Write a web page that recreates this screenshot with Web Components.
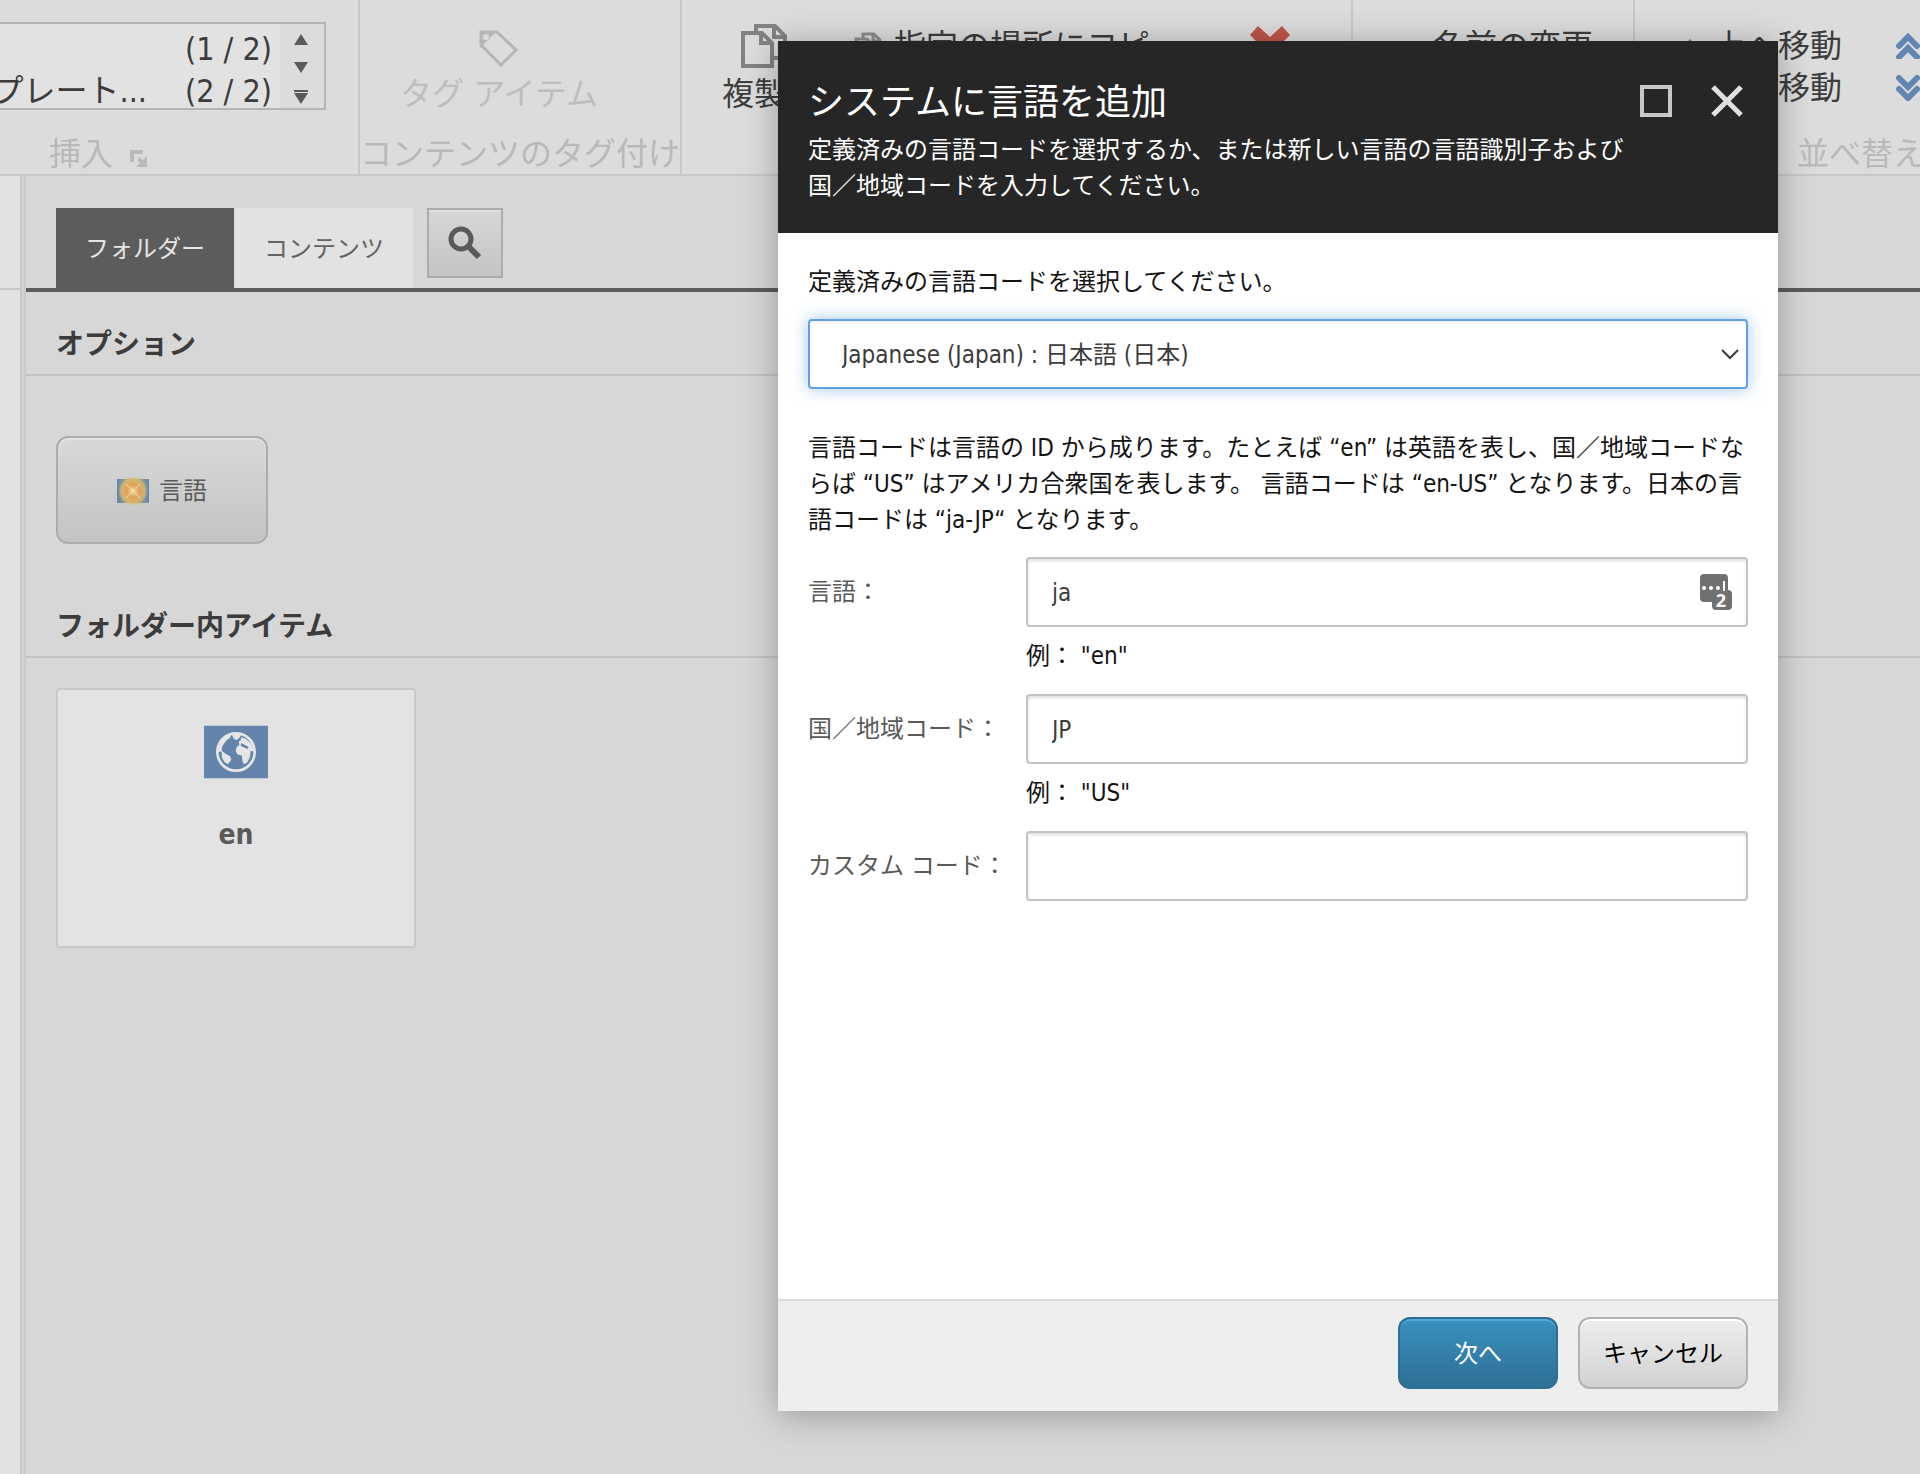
<!DOCTYPE html>
<html lang="ja">
<head>
<meta charset="utf-8">
<title>システムに言語を追加</title>
<style>
  html, body { margin: 0; height: 100%; }
  body {
    font-family: "DejaVu Sans Condensed", "Noto Sans CJK JP", sans-serif;
    font-size: 24px;
    line-height: 36px;
    color: #3c3c3c;
    background: #d7d7d7;
    overflow: hidden;
  }
</style>
</head>
<body>
<sc-editor></sc-editor>

<template id="t-editor">
  <style>
    :host { display: flex; flex-direction: column; min-height: 100vh; position: relative; }
    main { flex: 1; display: flex; }
    sc-content { flex: 1; }
    .layer { position: absolute; inset: 0; display: flex; justify-content: flex-end; padding: 41px 142px 63px 0; }
  </style>
  <sc-ribbon></sc-ribbon>
  <main>
    <sc-tree-edge></sc-tree-edge>
    <sc-content></sc-content>
  </main>
  <div class="layer"><sc-language-dialog></sc-language-dialog></div>
</template>

<template id="t-ribbon">
  <style>
    :host { display: flex; height: 174px; background: #dcdcdc; border-bottom: 2px solid #c8c8c8; font-size: 32px; line-height: 42px; overflow: hidden; }
    svg { display: block; flex: none; }
    .gallery { margin-top: 22px; width: 324px; height: 84px; display: flex; border: 2px solid #b4b4b4; border-left: 0; background: #e2e2e2; overflow: hidden; }
    .items { flex: 1; padding: 4px 8px 0 0; min-width: 0; }
    .item { display: flex; justify-content: flex-end; gap: 38px; white-space: nowrap; }
    .scroll { width: 44px; display: flex; flex-direction: column; align-items: center; gap: 16px; background: #dcdcdc; padding: 10px 2px 0 0; box-sizing: border-box; }
    .scroll button { all: unset; display: block; }
    .tools { display: flex; padding-top: 25px; }
    .row { display: flex; align-items: center; height: 42px; gap: 12px; white-space: nowrap; }
    .copy { gap: 48px; }
    .caret { display: inline; margin-left: 6px; }
    .side { padding: 25px 20px 0 0; }
    .delete { margin-top: 26px; }
    .rename { padding-left: 80px; }
    .sort { padding-left: 43px; gap: 53px; }
  </style>
  <sc-ribbon-group style="width:358px">
    <div class="gallery">
      <div class="items">
        <div class="item"><span>(1 / 2)</span></div>
        <div class="item"><span>プレート...</span><span>(2 / 2)</span></div>
      </div>
      <div class="scroll">
        <button aria-label="上へ"><svg width="16" height="12"><path d="M8 0L15 11H1z" fill="#5a5a5a"/></svg></button>
        <button aria-label="下へ"><svg width="16" height="12"><path d="M8 11L15 0H1z" fill="#5a5a5a"/></svg></button>
        <button aria-label="すべて"><svg width="16" height="15"><path d="M8 14L15 3H1zM1 0h14v2H1z" fill="#5a5a5a"/></svg></button>
      </div>
    </div>
    <span slot="label" style="padding-left:49px">挿入</span>
    <svg slot="label" width="17" height="17" style="margin:8px 0 0 17px"><path d="M2 12V2h11M2 2v10" fill="none" stroke="#bababa" stroke-width="4"/><path d="M17 6v11H6l4-4-3-3 3-3 3 3z" fill="#bababa"/></svg>
  </sc-ribbon-group>
  <sc-ribbon-group style="width:320px">
    <sc-big-button disabled>
      <svg slot="icon" width="40" height="38"><path d="M2 2H18L37 20L22 35L2 15Z" fill="none" stroke="#b6b6b6" stroke-width="3"/><path d="M1 1H18L1 18z" fill="#b6b6b6"/><circle cx="7" cy="7" r="3" fill="#dcdcdc"/></svg>
      タグ アイテム
    </sc-big-button>
    <span slot="label">コンテンツのタグ付け</span>
  </sc-ribbon-group>
  <sc-ribbon-group style="width:669px">
    <div class="tools copy" style="padding-top:0">
      <sc-big-button>
        <svg slot="icon" width="46" height="44"><g fill="none" stroke="#828282" stroke-width="4"><path d="M2 9H21L31 19V42H2Z"/><path d="M20 8V19H31"/><path d="M15 8V2H34L44 12V34H33"/><path d="M33 3V13H44"/></g></svg>
        複製<svg class="caret" width="14" height="14"><path d="M0 2H14L7 10z" fill="#5a5a5a"/></svg>
      </sc-big-button>
      <div class="side">
        <div class="row"><svg width="28" height="28"><g fill="none" stroke="#8c8c8c" stroke-width="3"><path d="M2 7H13L20 14V26H2Z"/><path d="M9 6V2H20L26 8V20H21"/><path d="M19 3V9H26"/></g></svg><span>指定の場所にコピー</span></div>
      </div>
      <svg class="delete" width="40" height="42"><path d="M8 0L20 11L32 0L40 9L29 20L40 32L32 40L20 29L8 40L0 32L11 20L0 9z" fill="#c05549"/></svg>
    </div>
  </sc-ribbon-group>
  <sc-ribbon-group style="width:280px">
    <div class="tools rename"><div class="row">名前の変更</div></div>
  </sc-ribbon-group>
  <sc-ribbon-group style="width:300px">
    <div class="tools sort">
      <div>
        <div class="row"><svg width="24" height="18"><path d="M12 2L22 12L18 16L12 10L6 16L2 12z" fill="#5f85b4"/></svg><span>上へ移動</span></div>
        <div class="row"><svg width="24" height="18"><path d="M12 16L22 6L18 2L12 8L6 2L2 6z" fill="#5f85b4"/></svg><span>下へ移動</span></div>
      </div>
      <div>
        <div class="row"><svg width="26" height="26"><path d="M4 13L13 4L22 13M4 24L13 15L22 24" fill="none" stroke="#6086b1" stroke-width="6" stroke-linecap="round"/></svg></div>
        <div class="row"><svg width="26" height="26"><path d="M4 3L13 12L22 3M4 14L13 23L22 14" fill="none" stroke="#6086b1" stroke-width="6" stroke-linecap="round"/></svg></div>
      </div>
    </div>
    <span slot="label" style="padding-left:162px">並べ替え</span>
  </sc-ribbon-group>
</template>

<template id="t-group">
  <style>
    :host { display: flex; flex-direction: column; flex: none; border-right: 2px solid #c8c8c8; }
    :host(:last-of-type) { border-right: 0; }
    .body { height: 134px; }
    .label { display: flex; align-items: center; height: 40px; line-height: 40px; color: #b9b9b9; white-space: nowrap; }
  </style>
  <div class="body"><slot></slot></div>
  <div class="label"><slot name="label"></slot></div>
</template>

<template id="t-big">
  <style>
    :host { display: block; padding: 24px 0 0 40px; }
    button { all: unset; display: flex; flex-direction: column; align-items: center; width: max-content; white-space: nowrap; cursor: pointer; }
    .icon { height: 49px; display: flex; align-items: flex-start; }
    :host([disabled]) .icon { align-items: center; }
    :host([disabled]) button { color: #bebebe; }
  </style>
  <button><span class="icon"><slot name="icon"></slot></span><span><slot></slot></span></button>
</template>

<template id="t-edge">
  <style>
    :host { display: block; width: 26px; box-sizing: border-box; background: #d4d4d4; border-right: 2px solid #cacaca; }
    .pane { height: 100%; width: 20px; background: #e2e2e2; border-right: 2px solid #c8c8c8; }
    .head { height: 112px; border-bottom: 2px solid #c8c8c8; }
  </style>
  <div class="pane"><div class="head"></div></div>
</template>

<template id="t-content">
  <style>
    :host { display: block; background: #d7d7d7; }
    .strip { display: flex; align-items: flex-start; padding: 32px 30px 0; border-bottom: 4px solid #5c5c5c; height: 80px; }
    .tab { all: unset; box-sizing: border-box; height: 80px; padding: 0 29px; line-height: 82px; text-align: center; background: #e2e2e2; color: #646464; cursor: pointer; margin-right: 2px; }
    .tab[aria-selected="true"] { background: #5c5c5c; color: #e6e6e6; margin-right: 1px; }
    .search { box-sizing: border-box; width: 76px; height: 70px; margin: 0 0 0 12px; padding: 0; display: flex; align-items: center; justify-content: center; border: 2px solid #acacac; background: linear-gradient(#d7d7d7, #c4c4c4); box-shadow: inset 0 2px #e0e0e0; }
    h2 { margin: 0; padding: 33px 30px 9px; font-size: 28px; line-height: 40px; font-weight: bold; border-bottom: 2px solid #c2c2c2; }
    .area { padding: 60px 30px 30px; }
    .area.items { padding-top: 30px; }
    .option { font: inherit; color: #5a5a5a; box-sizing: border-box; width: 212px; height: 108px; display: flex; align-items: center; justify-content: center; gap: 10px; border: 2px solid #acacac; border-radius: 12px; background: linear-gradient(#d8d8d8, #c4c4c4); box-shadow: inset 0 2px #e2e2e2; padding: 2px 0 0; }
    .card { text-decoration: none; color: #5a5a5a; box-sizing: border-box; width: 360px; height: 260px; display: flex; flex-direction: column; align-items: center; gap: 36px; padding-top: 35px; border: 2px solid #c8c8c8; border-radius: 4px; background: #e3e3e3; font-size: 28px; line-height: 40px; font-weight: bold; }
    svg { display: block; }
  </style>
  <div class="strip" role="tablist">
    <button class="tab" role="tab" aria-selected="true">フォルダー</button>
    <button class="tab" role="tab" aria-selected="false">コンテンツ</button>
    <button class="search" aria-label="検索"><svg width="34" height="34"><circle cx="13" cy="13" r="10" fill="none" stroke="#5a5a5a" stroke-width="5"/><path d="M20 20L31 31" stroke="#5a5a5a" stroke-width="6"/></svg></button>
  </div>
  <h2>オプション</h2>
  <div class="area">
    <button class="option">
      <svg width="32" height="30" viewBox="0 0 32 30">
        <defs>
          <linearGradient id="field"><stop offset="0" stop-color="#5f86b2"/><stop offset=".3" stop-color="#a3a07a"/><stop offset=".7" stop-color="#a3a07a"/><stop offset="1" stop-color="#5f86b2"/></linearGradient>
          <radialGradient id="sun"><stop offset="0" stop-color="#f2eede"/><stop offset=".15" stop-color="#ecc890"/><stop offset=".4" stop-color="#e0a05a"/><stop offset=".62" stop-color="#dcab60"/><stop offset=".8" stop-color="#d8bd70" stop-opacity=".8"/><stop offset="1" stop-color="#d3bb73" stop-opacity="0"/></radialGradient>
        </defs>
        <path d="M0 3H32V27H0z" fill="url(#field)"/><circle cx="16" cy="15" r="15" fill="url(#sun)"/><path d="M9 8L23 22M23 8L9 22" stroke="#f0d49a" stroke-width="2" opacity=".6"/>
      </svg>
      <span>言語</span>
    </button>
  </div>
  <h2>フォルダー内アイテム</h2>
  <div class="area items">
    <a class="card" href="#en">
      <svg width="64" height="54" viewBox="0 0 192 162">
        <path d="M0 2H192V160H0z" fill="#6384ab"/>
        <circle cx="96" cy="81" r="56" fill="none" stroke="#e6e6e6" stroke-width="8"/>
        <path d="M40 80C42 52 56 34 82 25L78 38L68 46L60 56L54 66L53 80z" fill="#e6e6e6"/>
        <path d="M52 76L64 86L78 94L82 104L72 117L62 112L54 98z" fill="#e6e6e6"/>
        <path d="M82 24H114L108 36L98 46L88 40z" fill="#e6e6e6"/>
        <path d="M112 36L126 42L140 54L147 68L151 82L144 78L140 78L138 96L130 112L120 118L115 108L114 92L100 88L95 78L98 66L106 60L104 50L110 46z" fill="#e6e6e6"/>
        <path d="M112 54L134 66L130 72L110 62z" fill="#6384ab"/>
      </svg>
      <span>en</span>
    </a>
  </div>
</template>

<template id="t-dialog">
  <style>
    :host { display: flex; flex-direction: column; width: 1000px; background: #fff; color: #141414; box-shadow: 0 4px 32px rgba(0,0,0,.3); }
    header { display: flex; gap: 8px; background: #262626; color: #fff; padding: 38px 34px 29px 30px; }
    .text { flex: 1; }
    h1 { margin: 0 0 5px; font-size: 36px; line-height: 48px; font-weight: normal; }
    p { margin: 0; }
    .window { display: flex; gap: 38px; padding-top: 6px; align-items: flex-start; }
    .window button { all: unset; display: block; cursor: pointer; }
    svg { display: block; }
    form { flex: 1; padding: 31px 30px 30px; }
    .select { display: grid; align-items: center; margin: 19px 0 41px; }
    .select > * { grid-area: 1 / 1; }
    .select svg { justify-self: end; margin-right: 8px; pointer-events: none; }
    select { appearance: none; box-sizing: border-box; width: 100%; height: 70px; margin: 0; padding: 2px 32px 0; font: inherit; color: #3c3c3c; background: #fff; border: 2px solid #5fa3e6; border-radius: 4px; outline: none; box-shadow: 0 0 16px rgba(95,163,230,.6), inset 0 2px 2px rgba(0,0,0,.06); }
    .fields { display: flex; flex-direction: column; gap: 20px; margin-top: 19px; }
    footer { display: flex; justify-content: flex-end; gap: 20px; background: #eee; border-top: 2px solid #dcdcdc; padding: 16px 30px 22px; }
    footer button { font: inherit; color: #000; box-sizing: border-box; height: 72px; min-width: 160px; padding: 2px 23px 0; border: 2px solid #b2b2b2; border-radius: 12px; background: linear-gradient(#eee, #d2d2d2); box-shadow: inset 0 2px #fff; }
    footer .primary { color: #fff; border-color: #2b6f93; background: linear-gradient(#3a90c0, #2d7095); box-shadow: inset 0 2px #55a8d4; }
  </style>
  <header>
    <div class="text">
      <h1>システムに言語を追加</h1>
      <p>定義済みの言語コードを選択するか、または新しい言語の言語識別子および国／地域コードを入力してください。</p>
    </div>
    <div class="window">
      <button aria-label="最大化"><svg width="32" height="32"><path d="M2 2H30V30H2z" fill="none" stroke="#c8c8c8" stroke-width="4"/></svg></button>
      <button aria-label="閉じる"><svg width="34" height="32"><path d="M3 2L31 30M31 2L3 30" fill="none" stroke="#e0e0e0" stroke-width="5"/></svg></button>
    </div>
  </header>
  <form>
    <label for="predefined">定義済みの言語コードを選択してください。</label>
    <div class="select">
      <select id="predefined"><option>Japanese (Japan) : 日本語 (日本)</option></select>
      <svg width="20" height="12"><path d="M2 2L10 10L18 2" fill="none" stroke="#3c3c3c" stroke-width="2"/></svg>
    </div>
    <p>言語コードは言語の ID から成ります。たとえば “en” は英語を表し、国／地域コードならば “US” はアメリカ合衆国を表します。 言語コードは “en-US” となります。日本の言語コードは “ja-JP“ となります。</p>
    <div class="fields">
      <sc-field label="言語：" value="ja" hint='例： "en"'>
        <svg width="32" height="36"><rect width="28" height="28" rx="4" fill="#717171"/><rect x="12" y="16" width="20" height="20" rx="4" fill="#717171"/><g fill="#fff"><circle cx="4" cy="14" r="2"/><circle cx="11" cy="14" r="2"/><circle cx="18" cy="14" r="2"/><path d="M23 7h2v10h-2z"/></g><text x="21" y="33" text-anchor="middle" font-family="Open Sans, sans-serif" font-size="18" font-weight="bold" fill="#fff">2</text></svg>
      </sc-field>
      <sc-field label="国／地域コード：" value="JP" hint='例： "US"'></sc-field>
      <sc-field label="カスタム コード：" value=""></sc-field>
    </div>
  </form>
  <footer>
    <button class="primary">次へ</button>
    <button>キャンセル</button>
  </footer>
</template>

<template id="t-field">
  <style>
    :host { display: grid; grid-template-columns: 218px 1fr; row-gap: 11px; }
    label { line-height: 70px; height: 70px; color: #5a5a5a; white-space: nowrap; }
    .box { display: grid; align-items: center; }
    .box > * { grid-area: 1 / 1; }
    .icon { justify-self: end; margin-right: 16px; }
    input { box-sizing: border-box; width: 100%; height: 70px; margin: 0; padding: 2px 24px 0; font: inherit; color: #3c3c3c; background: #fff; border: 2px solid #c3c3c3; border-radius: 4px; box-shadow: inset 0 2px 3px rgba(0,0,0,.12); }
    .hint { grid-column: 2; }
    .hint:empty { display: none; }
    ::slotted(svg) { display: block; }
  </style>
  <label for="value"></label>
  <div class="box"><input id="value" type="text"><span class="icon"><slot></slot></span></div>
  <div class="hint"></div>
</template>

<script>
  class TemplateElement extends HTMLElement {
    constructor() {
      super();
      const template = document.getElementById(this.constructor.template);
      this.attachShadow({ mode: "open" }).append(template.content.cloneNode(true));
    }
  }
  class ScField extends TemplateElement {
    static template = "t-field";
    connectedCallback() {
      const root = this.shadowRoot;
      root.querySelector("label").textContent = this.getAttribute("label");
      root.querySelector("input").value = this.getAttribute("value") || "";
      root.querySelector(".hint").textContent = this.getAttribute("hint") || "";
    }
  }
  const define = (name, template) =>
    customElements.define(name, class extends TemplateElement { static template = template; });

  customElements.define("sc-field", ScField);
  define("sc-big-button", "t-big");
  define("sc-ribbon-group", "t-group");
  define("sc-ribbon", "t-ribbon");
  define("sc-tree-edge", "t-edge");
  define("sc-content", "t-content");
  define("sc-language-dialog", "t-dialog");
  define("sc-editor", "t-editor");
</script>
</body>
</html>
